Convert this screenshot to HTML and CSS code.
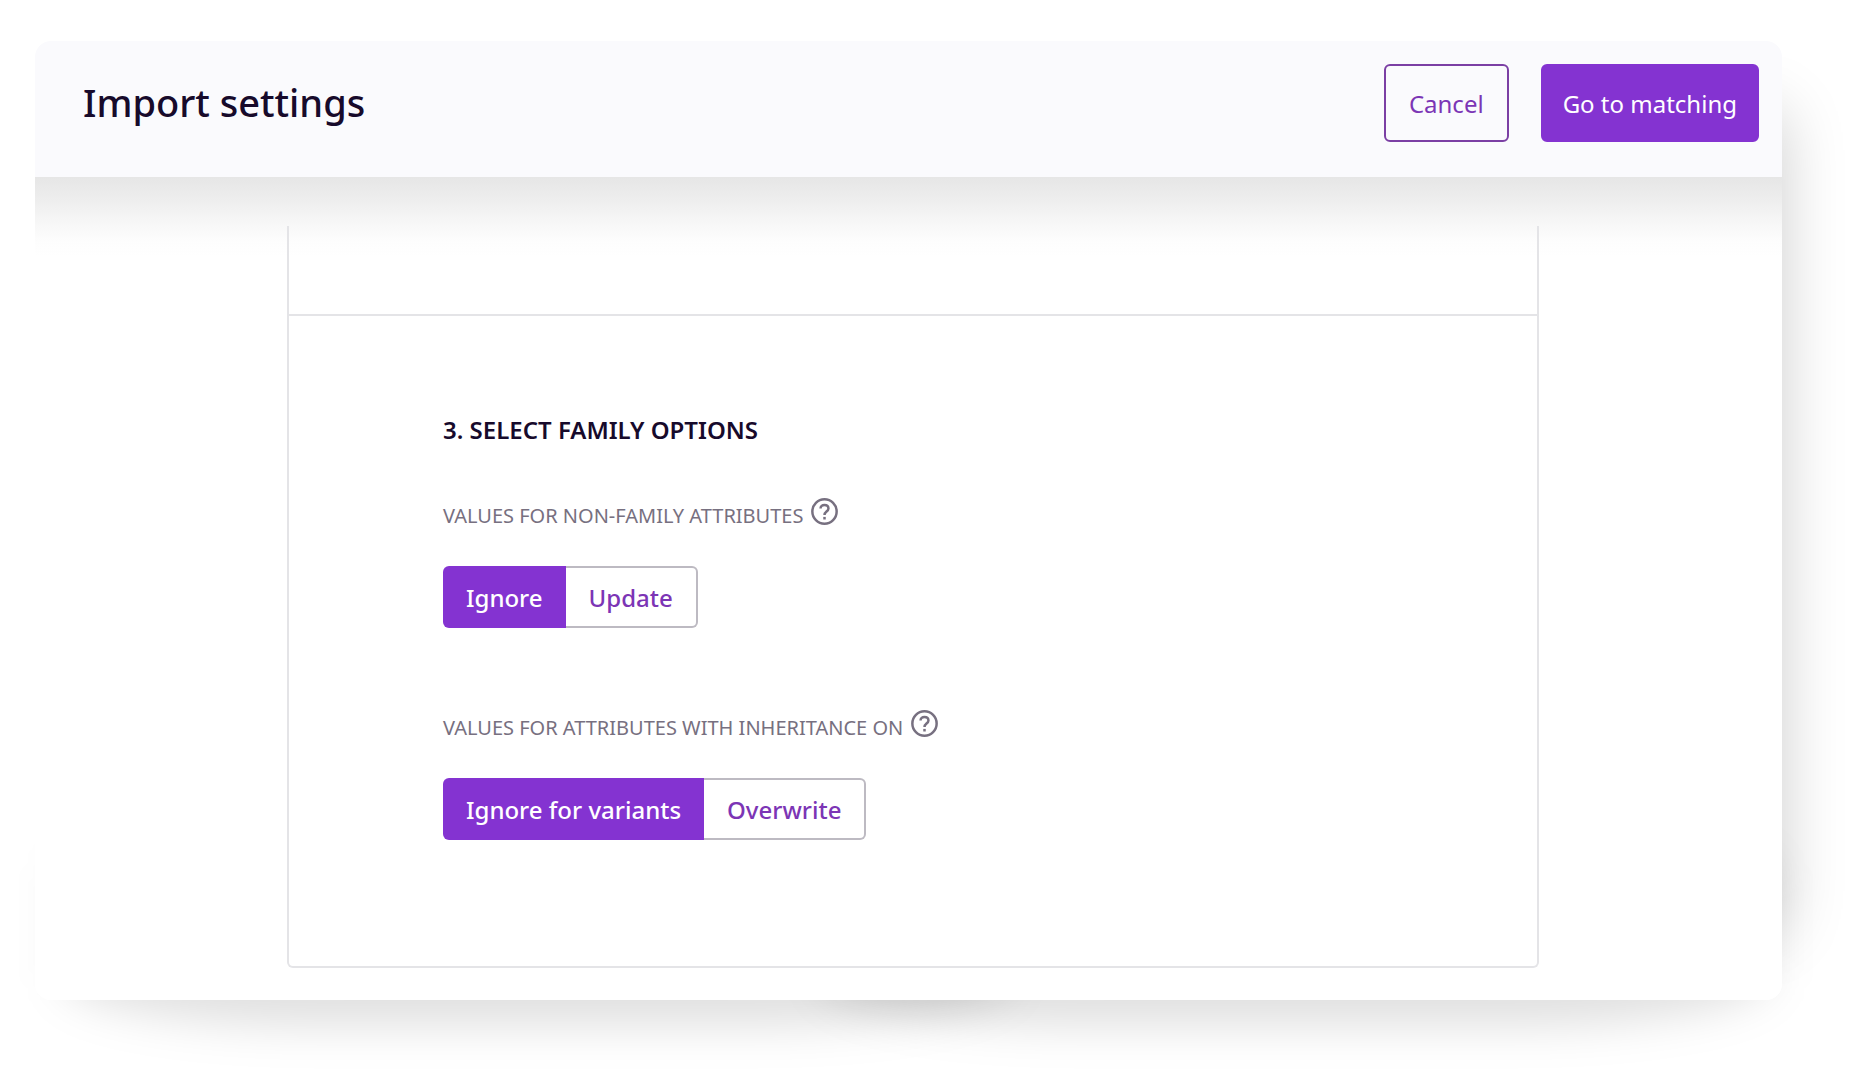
FILE: index.html
```html
<!DOCTYPE html>
<html lang="en">
<head>
    <meta charset="UTF-8">
    <title>Import settings</title>
    <link rel="stylesheet" href="styles.css">
</head>
<body>
  <div class="stage">
    <div class="window">
      <header class="header">
        <h1>Import settings</h1>
        <div class="actions">
          <button type="button" class="btn">Cancel</button>
          <button type="button" class="btn primary">Go to matching</button>
        </div>
      </header>
      <main class="content">
        <div class="panel">
          <div class="previous"></div>
          <section class="step">
            <h2>3. SELECT FAMILY OPTIONS</h2>
            <div class="option">
              <div class="label">
                <span id="non-family">VALUES FOR NON-FAMILY ATTRIBUTES</span>
                <svg class="help" viewBox="0 0 26 26">
                  <circle cx="13" cy="13" r="11.700"/>
                  <path d="M9.200 10.200C9.200 7.900 10.800 6.700 13 6.700s3.800 1.300 3.800 3.300c0 2.900-3.800 3.200-3.800 6.300"/>
                  <path d="M13 18.200v2.500"/>
                </svg>
              </div>
              <div class="toggle" role="group" aria-labelledby="non-family">
                <button type="button" class="current">Ignore</button>
                <button type="button">Update</button>
              </div>
            </div>
            <div class="option">
              <div class="label">
                <span id="inheritance">VALUES FOR ATTRIBUTES WITH INHERITANCE ON</span>
                <svg class="help" viewBox="0 0 26 26">
                  <circle cx="13" cy="13" r="11.700"/>
                  <path d="M9.200 10.200C9.200 7.900 10.800 6.700 13 6.700s3.800 1.300 3.800 3.300c0 2.900-3.800 3.200-3.800 6.300"/>
                  <path d="M13 18.200v2.500"/>
                </svg>
              </div>
              <div class="toggle" role="group" aria-labelledby="inheritance">
                <button type="button" class="current">Ignore for variants</button>
                <button type="button">Overwrite</button>
              </div>
            </div>
          </section>
        </div>
      </main>
    </div>
  </div>
</body>
</html>
```

FILE: styles.css
```css
*{
  margin: 0;
  padding: 0;
  box-sizing: border-box;
}
body{
  background-color: #fff;
  color: #170a2b;
  font-family: "Noto Sans", "Open Sans", sans-serif;
}
.stage{
  position: relative;
  z-index: 0;
  overflow: hidden;
  padding: 41px 76px 89px 35px;
}
/* two soft shadows that overlap under the window */
.stage::before,
.stage::after{
  content: "";
  position: absolute;
  z-index: -1;
  bottom: 63px;
  width: 51%;
  height: 200px;
  background-color: rgba(0,0,0,.12);
  border-radius: 260px / 50px;
  filter: blur(22px);
}
.stage::before{
  left: 62px;
}
.stage::after{
  right: 88px;
}
.window{
  background-color: #fff;
  border-radius: 16px;
  box-shadow: 70px 0 60px -70px rgba(0,0,0,.2);
  overflow: hidden;
}
.header{
  display: flex;
  justify-content: space-between;
  align-items: flex-start;
  height: 136px;
  padding: 23px 23px 0 48px;
  background-color: #fafafd;
}
h1{
  font-size: 38px;
  font-weight: 500;
  line-height: 76px;
}
.actions{
  display: flex;
  gap: 32px;
}
button{
  font-family: inherit;
  font-size: 24px;
  cursor: pointer;
}
.btn{
  height: 78px;
  padding: 0 23px;
  color: #7c35b5;
  background-color: transparent;
  border: 2px solid #7b3fa4;
  border-radius: 6px;
}
.primary{
  padding: 0 20px;
  color: #fff;
  background-color: #8433d1;
  border-color: #8433d1;
}
.content{
  padding: 49px 243px 32px 252px;
  background: linear-gradient(#e6e6e6, #eee 24px, #f7f7f7 46px, #fdfdfd 64px, #fff 80px) no-repeat;
}
.panel{
  border: 2px solid #e4e4e7;
  border-top: none;
  border-radius: 0 0 6px 6px;
}
.previous{
  height: 90px;
  border-bottom: 2px solid #e4e4e7;
}
.step{
  padding: 96px 154px 126px;
}
h2{
  font-size: 24px;
  font-weight: 600;
  line-height: 36px;
}
.option{
  margin-top: 50px;
}
.option + .option{
  margin-top: 82px;
}
.label{
  display: flex;
  align-items: flex-start;
  gap: 8px;
  color: #777080;
  font-size: 20px;
  line-height: 36px;
}
.help{
  width: 27px;
  height: 27px;
  fill: none;
  stroke: #777080;
  stroke-width: 2.4;
}
.toggle{
  display: inline-flex;
  margin-top: 32px;
}
.toggle button{
  height: 62px;
  padding: 0 23px;
  color: #7c35b5;
  font-weight: 500;
  background-color: #fff;
  border: 2px solid #bdbac2;
  border-left: none;
  border-radius: 0 6px 6px 0;
}
.toggle .current{
  color: #fff;
  background-color: #8433d1;
  border: none;
  border-radius: 6px 0 0 6px;
}
```
